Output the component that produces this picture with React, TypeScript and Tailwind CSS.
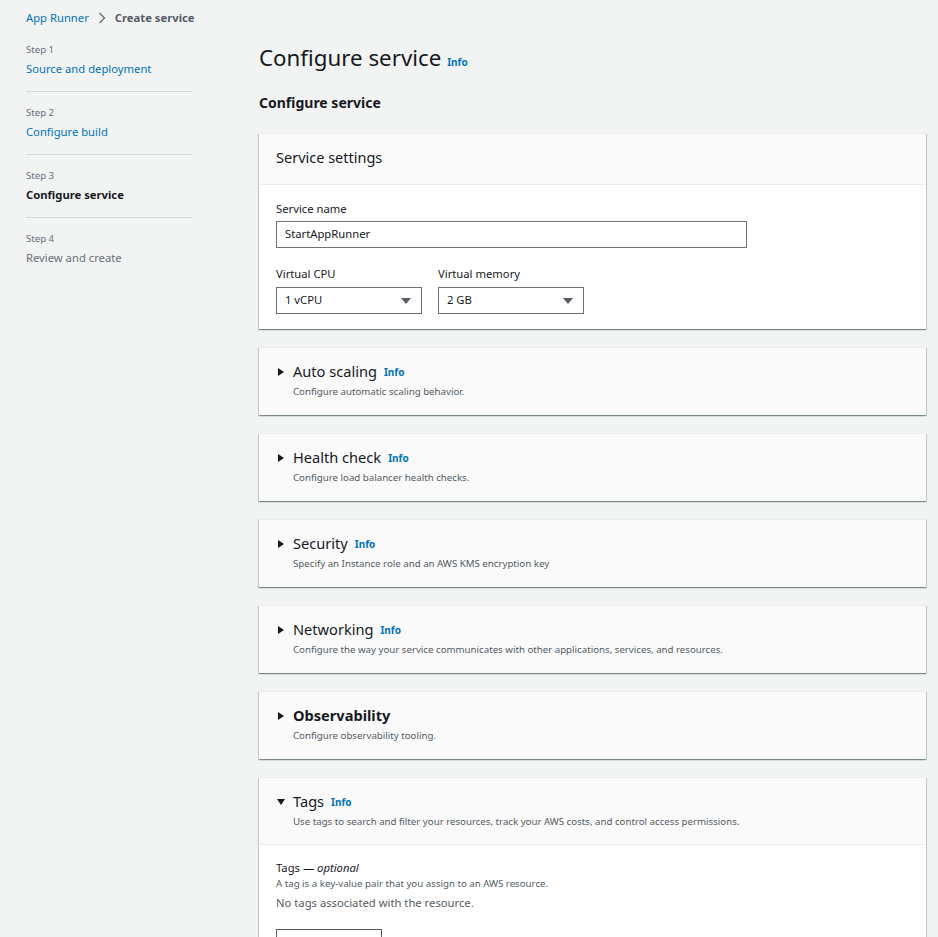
import React from 'react'

const font = { fontFamily: '"Noto Sans", "Open Sans", Arial, sans-serif' }

function Caret({ open }: { open?: boolean }) {
  return (
    <svg width="10" height="10" viewBox="0 0 10 10" className="shrink-0">
      {open ? <polygon points="1,2 9,2 5,8" fill="#16191f" /> : <polygon points="2,1 8,5 2,9" fill="#16191f" />}
    </svg>
  )
}

function SelectBox({ value }: { value: string }) {
  return (
    <div className="flex h-[27px] w-[146px] items-center justify-between border border-[#687078] bg-white pl-[8px] pr-[10px] text-[11.25px] text-[#16191f]">
      <span>{value}</span>
      <svg width="10" height="8" viewBox="0 0 10 8">
        <polygon points="0,1 10,1 5,7" fill="#545b64" />
      </svg>
    </div>
  )
}

const cardShadow =
  'shadow-[0_1px_1px_0_rgba(0,28,36,0.3),1px_1px_1px_0_rgba(0,28,36,0.15),-1px_1px_1px_0_rgba(0,28,36,0.15)]'

function Section({ title, desc, bold, open, children }: { title: string; desc: string; bold?: boolean; open?: boolean; children?: React.ReactNode }) {
  return (
    <div className={`border-t border-[#eaeded] bg-white ${cardShadow}`}>
      <div className={`bg-[#fafafa] px-[17px] pt-[12px] ${open ? 'border-b border-[#eaeded] pb-[14px]' : 'pb-[15px]'}`}>
        <div className="flex items-center gap-[7px]">
          <span className="mt-[1px]"><Caret open={open} /></span>
          <span className={`text-[14.6px] leading-[22px] text-[#16191f] ${bold ? 'font-bold' : ''}`}>{title}</span>
          {!bold && <span className="mt-[2px] text-[10px] font-bold text-[#0073bb]">Info</span>}
        </div>
        <div className="mt-[2px] pl-[17px] text-[9.7px] leading-[16px] text-[#545b64]">{desc}</div>
      </div>
      {children}
    </div>
  )
}

export default function App() {
  return (
    <div className="min-h-screen bg-[#f2f3f3] text-[#16191f]" style={font}>
      <div className="flex items-center gap-[9px] px-[26px] pt-[9px] text-[11.25px] leading-[18px]">
        <span className="text-[#0073bb]">App Runner</span>
        <svg width="8" height="12" viewBox="0 0 8 12">
          <polyline points="1.5,1 6.5,6 1.5,11" fill="none" stroke="#687078" strokeWidth="1.4" />
        </svg>
        <span className="font-bold text-[#545b64]">Create service</span>
      </div>
      <div className="flex">
        <div className="w-[259px] shrink-0 pl-[26px] pt-[15px]">
          <div className="w-[166px]">
            {[
              { step: 'Step 1', label: 'Source and deployment', cls: 'text-[#0073bb]' },
              { step: 'Step 2', label: 'Configure build', cls: 'text-[#0073bb]' },
              { step: 'Step 3', label: 'Configure service', cls: 'font-bold text-[#16191f]' },
              { step: 'Step 4', label: 'Review and create', cls: 'text-[#687078]' },
            ].map((s, i) => (
              <div key={s.step} className={i < 3 ? 'border-b border-[#d5dbdb] pb-[13px] mb-[13px]' : ''}>
                <div className="text-[9.6px] leading-[16px] text-[#687078]">{s.step}</div>
                <div className={`mt-[2px] text-[11.25px] leading-[18px] ${s.cls}`}>{s.label}</div>
              </div>
            ))}
          </div>
        </div>
        <div className="flex-1 pr-[12px]">
          <div className="flex items-baseline pt-[13px]">
            <h1 className="text-[22.3px] leading-[36px] text-[#16191f]">Configure service</h1>
            <span className="ml-[6px] text-[10px] font-bold text-[#0073bb]">Info</span>
          </div>
          <h2 className="mt-[17px] text-[14px] font-bold leading-[20px]">Configure service</h2>
          <div className="mt-[20px] flex flex-col gap-[18px]">
            <div className={`border-t border-[#eaeded] bg-white ${cardShadow}`}>
              <div className="border-b border-[#eaeded] bg-[#fafafa] px-[17px] pt-[11px] pb-[15px] text-[14.5px] leading-[24px]">Service settings</div>
              <div className="px-[17px] pt-[15px] pb-[15px]">
                <div className="text-[11.25px] leading-[18px]">Service name</div>
                <div className="mt-[3px] flex h-[27px] w-[471px] items-center border border-[#687078] bg-white px-[8px] text-[11.25px]">StartAppRunner</div>
                <div className="mt-[17px] flex gap-[16px]">
                  <div>
                    <div className="text-[11.25px] leading-[18px]">Virtual CPU</div>
                    <div className="mt-[4px]"><SelectBox value="1 vCPU" /></div>
                  </div>
                  <div>
                    <div className="text-[11.25px] leading-[18px]">Virtual memory</div>
                    <div className="mt-[4px]"><SelectBox value="2 GB" /></div>
                  </div>
                </div>
              </div>
            </div>
            <Section title="Auto scaling" desc="Configure automatic scaling behavior." />
            <Section title="Health check" desc="Configure load balancer health checks." />
            <Section title="Security" desc="Specify an Instance role and an AWS KMS encryption key" />
            <Section title="Networking" desc="Configure the way your service communicates with other applications, services, and resources." />
            <Section title="Observability" desc="Configure observability tooling." bold />
            <Section title="Tags" desc="Use tags to search and filter your resources, track your AWS costs, and control access permissions." open>
              <div className="px-[17px] pt-[14px] pb-[20px]">
                <div className="text-[11.25px] leading-[18px]">Tags — <i>optional</i></div>
                <div className="text-[9.7px] leading-[14px] text-[#545b64]">A tag is a key-value pair that you assign to an AWS resource.</div>
                <div className="mt-[3px] text-[11.25px] leading-[18px] text-[#545b64]">No tags associated with the resource.</div>
                <button className="mt-[17px] h-[28px] w-[106px] border border-[#545b64] bg-white text-[11.25px] font-bold text-[#545b64]">Add new tag</button>
              </div>
            </Section>
          </div>
        </div>
      </div>
    </div>
  )
}
